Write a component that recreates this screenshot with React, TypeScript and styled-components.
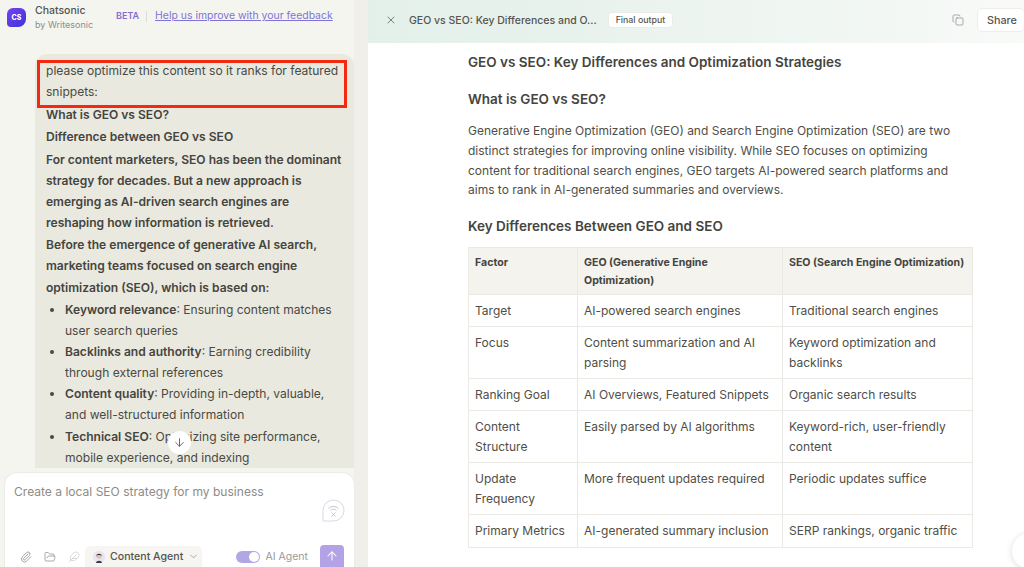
import React from 'react';
import styled, { createGlobalStyle } from 'styled-components';
import { ArrowDown, ArrowUp, ChevronDown, Copy, Feather, FolderOpen, Paperclip, X } from 'lucide-react';

const GlobalStyle = createGlobalStyle`
  html, body {
    margin: 0;
    padding: 0;
    height: 100%;
    overflow: hidden;
    background: #fff;
    font-family: Inter, "Liberation Sans", sans-serif;
    color: #45443e;
  }
  * { box-sizing: border-box; }
`;

const Page = styled.div`
  display: flex;
  width: 1024px;
  height: 567px;
  overflow: hidden;
  position: relative;
`;

const ChatPanel = styled.aside`
  width: 354px;
  flex: none;
  display: flex;
  flex-direction: column;
  background: #f5f5f0;
`;

const Gutter = styled.div`
  width: 14px;
  flex: none;
  background: #f0efea;
  display: flex;
  align-items: center;
  justify-content: flex-end;
`;

const Grip = styled.div`
  width: 4px;
  height: 6px;
  background-image: radial-gradient(circle, #a5a49e 0.6px, transparent 0.7px);
  background-size: 2px 2px;
  margin-top: 7px;
`;

const ChatHeader = styled.header`
  height: 54px;
  flex: none;
  display: flex;
  align-items: flex-start;
  padding: 4px 0 0 7px;
`;

const Logo = styled.div`
  width: 19px;
  height: 19px;
  margin-top: 4px;
  border-radius: 6px 6px 8px 4px;
  background: linear-gradient(135deg, #7a3ff2, #3a36d8);
  color: #fff;
  font-size: 7px;
  font-weight: 800;
  display: flex;
  align-items: center;
  justify-content: center;
`;

const Brand = styled.div`
  margin-left: 9px;
  width: 81px;
  display: flex;
  flex-direction: column;
`;

const BrandName = styled.span`
  font-size: 10.5px;
  line-height: 14px;
  font-weight: 500;
  color: #55544e;
`;

const BrandSub = styled.span`
  font-size: 9px;
  line-height: 14px;
  color: #8e8d87;
`;

const BetaTag = styled.span`
  margin-top: 5px;
  font-size: 9px;
  line-height: 14px;
  font-weight: 600;
  color: #7f6fd0;
`;

const HeaderRule = styled.span`
  width: 1px;
  height: 11px;
  margin: 7px 8px 0 7px;
  background: #dddcd6;
`;

const FeedbackLink = styled.a`
  margin-top: 5px;
  font-size: 10.45px;
  line-height: 14px;
  color: #7f73d6;
  text-decoration: underline;
`;

const MessageArea = styled.div`
  flex: 1;
  min-height: 0;
  overflow: hidden;
  padding-left: 35px;
`;

const Bubble = styled.div`
  background: #e9e9df;
  border-radius: 12px 12px 0 0;
  padding: 6px 7px 0 11px;
  font-size: 12.05px;
  line-height: 21.1px;
  color: #4a4943;
`;

const Line = styled.div`
  font-weight: 600;
  color: #45443e;
  margin-top: 1.4px;
`;

const PlainLine = styled.div``;

const BulletList = styled.ul`
  margin: 1.4px 0 0;
  padding: 0 0 0 19px;
`;

const Bullet = styled.li`
  strong { font-weight: 600; color: #45443e; }
`;

const Composer = styled.div`
  height: 94px;
  flex: none;
  margin-left: 5px;
  width: 349px;
  background: #fff;
  border-radius: 12px 12px 0 0;
  box-shadow: 0 0 0 1px #ecebe6;
  display: flex;
  flex-direction: column;
  justify-content: space-between;
  padding: 11px 10px 0 9px;
  position: relative;
  z-index: 1;
`;

const Placeholder = styled.div`
  font-size: 12.05px;
  line-height: 16px;
  color: #8d8c86;
`;

const BubbleIcon = styled.div`
  position: absolute;
  right: 9px;
  top: 26px;
  width: 23px;
  height: 23px;
  color: #d9d8e4;
`;

const ComposerBar = styled.div`
  display: flex;
  align-items: flex-end;
  height: 24px;
`;

const ToolIcons = styled.div`
  display: flex;
  align-items: center;
  gap: 12px;
  height: 21px;
  padding-left: 6px;
  color: #8f8e89;
`;

const AgentPicker = styled.div`
  margin-left: 5px;
  width: 117px;
  height: 21px;
  border-radius: 5px 5px 0 0;
  background: #f6f5f1;
  display: flex;
  align-items: center;
  gap: 5px;
  padding-left: 8px;
  font-size: 10.6px;
  font-weight: 500;
  color: #55544e;
  white-space: nowrap;
`;

const Avatar = styled.span`
  display: flex;
  width: 12px;
  height: 12px;
  flex: none;
`;

const ToggleGroup = styled.div`
  margin-left: auto;
  display: flex;
  align-items: center;
  gap: 6px;
  height: 21px;
  font-size: 10.5px;
  color: #9a9994;
`;

const Toggle = styled.div`
  width: 24px;
  height: 12px;
  border-radius: 6px;
  background: #b3a6e4;
  display: flex;
  justify-content: flex-end;
  align-items: center;
  padding-right: 1px;

  &::after {
    content: '';
    width: 10px;
    height: 10px;
    border-radius: 50%;
    background: #fff;
  }
`;

const SendButton = styled.button`
  margin-left: 12px;
  width: 24px;
  height: 22px;
  padding: 0;
  border: 0;
  border-radius: 4px 4px 0 0;
  background: #b3a3e6;
  color: #fff;
  display: flex;
  align-items: center;
  justify-content: center;
`;

const ScrollDown = styled.div`
  position: absolute;
  left: 168px;
  top: 431px;
  width: 23px;
  height: 23px;
  border-radius: 50%;
  background: #fff;
  color: #55544e;
  display: flex;
  align-items: center;
  justify-content: center;
`;

const Annotation = styled.div`
  position: absolute;
  left: 37px;
  top: 60px;
  width: 310px;
  height: 48px;
  border: 3px solid #f5290f;
`;

const OutputPanel = styled.main`
  flex: 1;
  min-width: 0;
  display: flex;
  flex-direction: column;
  background: #fff;
`;

const OutputHeader = styled.header`
  height: 43px;
  flex: none;
  display: flex;
  align-items: center;
  padding: 0 0 3px 17px;
  background: linear-gradient(90deg, #e3f0e9 0%, #eaf3ee 40%, #f8faf8 100%);
`;

const CloseButton = styled.span`
  display: flex;
  color: #66655f;
  margin-right: 12px;
`;

const OutputTitle = styled.span`
  font-size: 10.5px;
  font-weight: 500;
  color: #55544e;
  white-space: nowrap;
`;

const StatusPill = styled.span`
  margin-left: 11px;
  height: 16px;
  padding: 0 7px;
  border-radius: 4px;
  background: #fff;
  border: 1px solid #ecece6;
  font-size: 8.8px;
  font-weight: 500;
  line-height: 14px;
  color: #55544e;
`;

const CopyButton = styled.span`
  margin-left: auto;
  display: flex;
  color: #8a8983;
`;

const ShareButton = styled.button`
  margin-left: 13px;
  margin-right: -1px;
  width: 48px;
  height: 24px;
  padding: 0 0 0 9px;
  border: 1px solid #eeede8;
  border-radius: 5px;
  background: #fff;
  font-family: inherit;
  font-size: 10.8px;
  font-weight: 500;
  color: #55544e;
  text-align: left;
`;

const Article = styled.article`
  width: 504px;
  margin-left: 100px;
  padding-top: 10px;
`;

const DocTitle = styled.h1`
  margin: 0;
  font-size: 13.5px;
  line-height: 18px;
  font-weight: 600;
  color: #45443e;
`;

const SectionTitle = styled.h2<{ $top: number }>`
  margin: ${p => p.$top}px 0 0;
  font-size: 13.5px;
  line-height: 18px;
  font-weight: 600;
  color: #45443e;
`;

const Paragraph = styled.p`
  margin: 13px 0 0;
  font-size: 12px;
  line-height: 19.8px;
  color: #4f4e48;
`;

const OutputTable = styled.table`
  margin-top: 12px;
  width: 504px;
  border-collapse: collapse;
  table-layout: fixed;
`;

const Th = styled.th`
  background: #f4f3ee;
  border: 1px solid #eae9e4;
  padding: 6px 7px 4px 6px;
  font-size: 10.6px;
  line-height: 17.7px;
  font-weight: 700;
  text-align: left;
  vertical-align: top;
  color: #45443e;
`;

const Td = styled.td`
  border: 1px solid #eae9e4;
  padding: 6px 6px 5.5px 6px;
  font-size: 12px;
  line-height: 19.8px;
  vertical-align: top;
  color: #4f4e48;
`;

const FloatingCircle = styled.div`
  position: absolute;
  left: 1012px;
  top: 533px;
  width: 36px;
  height: 36px;
  border-radius: 50%;
  background: #fff;
  box-shadow: 0 1px 6px rgba(0, 0, 0, 0.14);
`;

const rows: [string, string, string][] = [
  ['Target', 'AI-powered search engines', 'Traditional search engines'],
  ['Focus', 'Content summarization and AI parsing', 'Keyword optimization and backlinks'],
  ['Ranking Goal', 'AI Overviews, Featured Snippets', 'Organic search results'],
  ['Content Structure', 'Easily parsed by AI algorithms', 'Keyword-rich, user-friendly content'],
  ['Update Frequency', 'More frequent updates required', 'Periodic updates suffice'],
  ['Primary Metrics', 'AI-generated summary inclusion', 'SERP rankings, organic traffic'],
];

const App: React.FC = () => {
  return (
    <>
      <GlobalStyle />
      <Page>
        <ChatPanel>
          <ChatHeader>
            <Logo>CS</Logo>
            <Brand>
              <BrandName>Chatsonic</BrandName>
              <BrandSub>by Writesonic</BrandSub>
            </Brand>
            <BetaTag>BETA</BetaTag>
            <HeaderRule />
            <FeedbackLink>Help us improve with your feedback</FeedbackLink>
          </ChatHeader>
          <MessageArea>
            <Bubble>
              <PlainLine>please optimize this content so it ranks for featured snippets:</PlainLine>
              <Line>What is GEO vs SEO?</Line>
              <Line>Difference between GEO vs SEO</Line>
              <Line>
                For content marketers, SEO has been the dominant strategy for decades. But a new approach is
                emerging as AI-driven search engines are reshaping how information is retrieved.
              </Line>
              <Line>
                Before the emergence of generative AI search, marketing teams focused on search engine
                optimization (SEO), which is based on:
              </Line>
              <BulletList>
                <Bullet><strong>Keyword relevance</strong>: Ensuring content matches user search queries</Bullet>
                <Bullet><strong>Backlinks and authority</strong>: Earning credibility through external references</Bullet>
                <Bullet><strong>Content quality</strong>: Providing in-depth, valuable, and well-structured information</Bullet>
                <Bullet><strong>Technical SEO</strong>: Optimizing site performance, mobile experience, and indexing</Bullet>
              </BulletList>
            </Bubble>
          </MessageArea>
          <Composer>
            <Placeholder>Create a local SEO strategy for my business</Placeholder>
            <BubbleIcon>
              <svg width="23" height="23" viewBox="0 0 23 23" fill="none" stroke="currentColor" strokeWidth="1">
                <path d="M1 22V11.5a10.5 10.5 0 1 1 10.5 10.5z" />
                <g stroke="#c5c4cc">
                  <path d="M6.5 9.5a7 7 0 0 1 10 0" />
                  <path d="M8.500 11.5a4 4 0 0 1 6 0" />
                  <path d="M9.5 13.5l4 4M13.5 13.5l-4 4" />
                </g>
              </svg>
            </BubbleIcon>
            <ComposerBar>
              <ToolIcons>
                <Paperclip size={12} strokeWidth={1.6} />
                <FolderOpen size={12} strokeWidth={1.5} />
                <Feather size={12} strokeWidth={1.2} color="#c4c3be" />
              </ToolIcons>
              <AgentPicker>
                <Avatar>
                  <svg width="12" height="12" viewBox="0 0 12 12">
                    <circle cx="6" cy="6" r="6" fill="#e8e2f2" />
                    <circle cx="6" cy="5" r="2.6" fill="#d9c3b4" />
                    <path d="M3.2 4.8C3 2.4 9 2.2 8.8 4.8 8 3.8 4 3.8 3.2 4.8z" fill="#2e2c2a" />
                    <path d="M3 12c.2-3 5.800-3 6 0z" fill="#3c3a38" />
                  </svg>
                </Avatar>
                Content Agent
                <ChevronDown size={11} strokeWidth={1.5} color="#8a8983" />
              </AgentPicker>
              <ToggleGroup>
                <Toggle />
                AI Agent
              </ToggleGroup>
              <SendButton>
                <ArrowUp size={14} strokeWidth={1.8} />
              </SendButton>
            </ComposerBar>
          </Composer>
        </ChatPanel>
        <Gutter>
          <Grip />
        </Gutter>
        <OutputPanel>
          <OutputHeader>
            <CloseButton>
              <X size={12} strokeWidth={1.6} />
            </CloseButton>
            <OutputTitle>GEO vs SEO: Key Differences and O...</OutputTitle>
            <StatusPill>Final output</StatusPill>
            <CopyButton>
              <Copy size={12} strokeWidth={1.4} />
            </CopyButton>
            <ShareButton>Share</ShareButton>
          </OutputHeader>
          <Article>
            <DocTitle>GEO vs SEO: Key Differences and Optimization Strategies</DocTitle>
            <SectionTitle $top={19}>What is GEO vs SEO?</SectionTitle>
            <Paragraph>
              Generative Engine Optimization (GEO) and Search Engine Optimization (SEO) are two distinct
              strategies for improving online visibility. While SEO focuses on optimizing content for
              traditional search engines, GEO targets AI-powered search platforms and aims to rank in
              AI-generated summaries and overviews.
            </Paragraph>
            <SectionTitle $top={17}>Key Differences Between GEO and SEO</SectionTitle>
            <OutputTable>
              <colgroup>
                <col width="109" />
                <col width="205" />
                <col width="190" />
              </colgroup>
              <thead>
                <tr>
                  <Th>Factor</Th>
                  <Th>GEO (Generative Engine Optimization)</Th>
                  <Th>SEO (Search Engine Optimization)</Th>
                </tr>
              </thead>
              <tbody>
                {rows.map(row => (
                  <tr key={row[0]}>
                    {row.map(cell => (
                      <Td key={cell}>{cell}</Td>
                    ))}
                  </tr>
                ))}
              </tbody>
            </OutputTable>
          </Article>
        </OutputPanel>
        <ScrollDown>
          <ArrowDown size={13} strokeWidth={1.6} />
        </ScrollDown>
        <Annotation />
        <FloatingCircle />
      </Page>
    </>
  );
};

export default App;
